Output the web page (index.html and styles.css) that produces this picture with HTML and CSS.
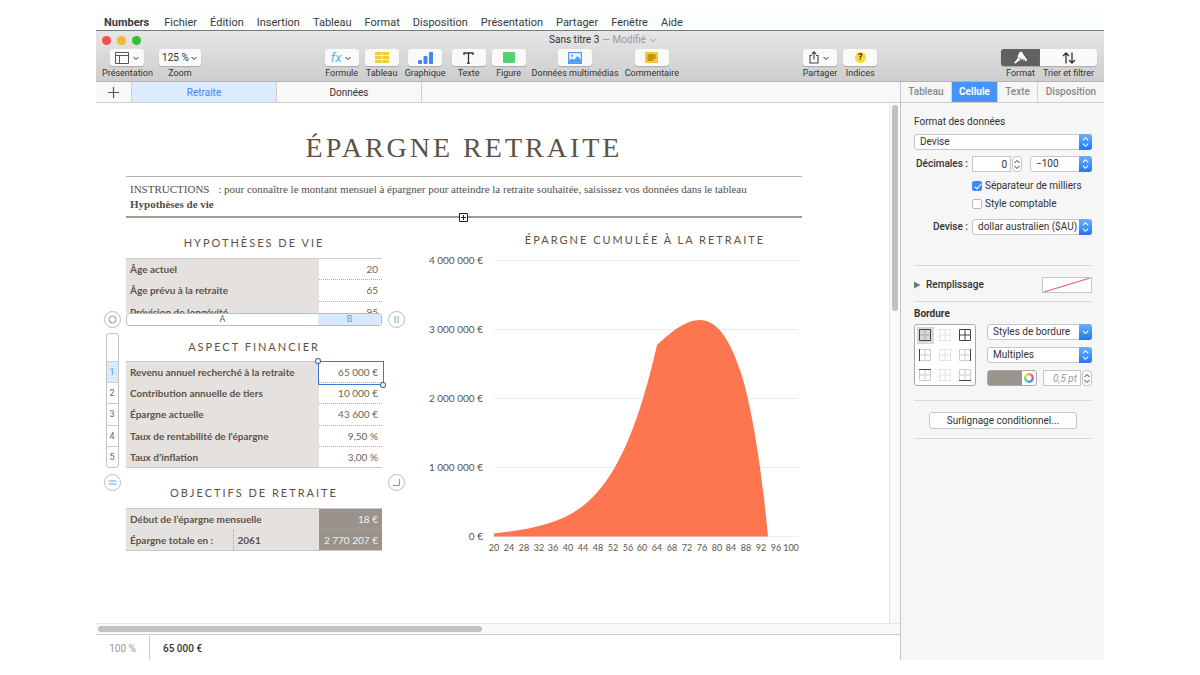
FILE: index.html
```html
<!DOCTYPE html>
<html lang="fr">
<head>
<meta charset="utf-8">
<meta name="viewport" content="width=device-width, initial-scale=1">
<title>Sans titre 3</title>
<link rel="stylesheet" href="styles.css">
</head>
<body>
<svg class="defs" aria-hidden="true">
  <symbol id="updown" viewBox="0 0 12 15"><path d="M3.5 6 6 3.5 8.5 6M3.5 9 6 11.5 8.5 9"/></symbol>
  <symbol id="down" viewBox="0 0 8 8"><path d="M1.5 3 4 5.500 6.500 3"/></symbol>
  <symbol id="grid" viewBox="0 0 14 14"><path d="M1.500 1.500h11v11h-11zM7 1.500v11M1.500 7h11"/></symbol>
</svg>

<nav class="menubar">
  <a class="app-name" href="#">Numbers</a>
  <a href="#">Fichier</a>
  <a href="#">Édition</a>
  <a href="#">Insertion</a>
  <a href="#">Tableau</a>
  <a href="#">Format</a>
  <a href="#">Disposition</a>
  <a href="#">Présentation</a>
  <a href="#">Partager</a>
  <a href="#">Fenêtre</a>
  <a href="#">Aide</a>
</nav>

<div class="window">
  <header class="chrome">
    <div class="titlebar">
      <div class="lights">
        <button class="light close" aria-label="Fermer"></button>
        <button class="light minimize" aria-label="Réduire"></button>
        <button class="light zoom" aria-label="Agrandir"></button>
      </div>
      <div class="title">Sans titre 3 <span class="modified">— Modifié</span><svg class="chevron" viewBox="0 0 8 8"><use href="#down"/></svg></div>
    </div>

    <div class="toolbar">
      <div class="tools">
        <button class="tool">
          <span class="face"><svg width="14" height="12" viewBox="0 0 14 12" fill="none" stroke="#555"><path d="M.5 .5h13v11H.5zM.5 3.500h13M4.500 3.500v8"/></svg><svg class="chevron" viewBox="0 0 8 8"><use href="#down"/></svg></span>
          <span>Présentation</span>
        </button>
        <button class="tool">
          <span class="face wide">125 %<svg class="chevron" viewBox="0 0 8 8"><use href="#down"/></svg></span>
          <span>Zoom</span>
        </button>
      </div>

      <div class="tools">
        <button class="tool">
          <span class="face"><i class="fx">fx</i><svg class="chevron" viewBox="0 0 8 8"><use href="#down"/></svg></span>
          <span>Formule</span>
        </button>
        <button class="tool">
          <span class="face"><svg width="14" height="11" viewBox="0 0 14 11" fill="#f7ca39"><path d="M0 0h6.600v3.200H0zM7.400 0H14v3.200H7.400zM0 4h6.600v3H0zM7.400 4H14v3H7.400zM0 7.800h6.600V11H0zM7.400 7.800H14V11H7.400z"/></svg></span>
          <span>Tableau</span>
        </button>
        <button class="tool">
          <span class="face"><svg width="15" height="12" viewBox="0 0 15 12" fill="#4087f5"><rect y="8" width="4" height="4" rx="1"/><rect x="5.500" y="4" width="4" height="8" rx="1"/><rect x="11" width="4" height="12" rx="1"/></svg></span>
          <span>Graphique</span>
        </button>
        <button class="tool">
          <span class="face"><svg width="11" height="12" viewBox="0 0 11 12" fill="none" stroke="#333" stroke-width="1.300"><path d="M1 3V1h9v2M5.500 1v10M4 11.200h3"/></svg></span>
          <span>Texte</span>
        </button>
        <button class="tool">
          <span class="face"><svg width="12" height="11" viewBox="0 0 12 11"><rect width="12" height="11" rx="1" fill="#4fd471"/></svg></span>
          <span>Figure</span>
        </button>
        <button class="tool">
          <span class="face"><svg width="14" height="12" viewBox="0 0 14 12"><rect x=".6" y=".6" width="12.800" height="10.800" fill="#eef6ff" stroke="#4e9bf3" stroke-width="1.200"/><circle cx="4" cy="3.800" r="1.100" fill="#4e9bf3"/><path d="M1 10.800V8.500L4 6.500l2 1.500 3.500-4L13 8v2.800z" fill="#4e9bf3"/></svg></span>
          <span>Données multimédias</span>
        </button>
        <button class="tool">
          <span class="face"><svg width="13" height="11" viewBox="0 0 13 11"><rect width="13" height="11" fill="#f8c73a"/><path d="M2.500 2h8v5L8.500 9h-6z" fill="#c8920d"/><path d="M8.500 9V7h2z" fill="#fbe08c"/></svg></span>
          <span>Commentaire</span>
        </button>
      </div>

      <div class="tools">
        <button class="tool">
          <span class="face"><svg width="10" height="13" viewBox="0 0 10 13" fill="none" stroke="#444" stroke-width="1.100"><path d="M3 4.500H1v7.500h8V4.500H7M5 8.500V1M2.900 3 5 .9 7.100 3"/></svg><svg class="chevron" viewBox="0 0 8 8"><use href="#down"/></svg></span>
          <span>Partager</span>
        </button>
        <button class="tool">
          <span class="face"><b class="hint">?</b></span>
          <span>Indices</span>
        </button>
      </div>

      <div class="segmented">
        <button class="tool">
          <span class="face on"><svg width="14" height="13" viewBox="0 0 14 13" fill="#fff"><path d="M5.500 1.200 7.500.5l5.800 8.700-2 1.200-1-2.600-.3 2.400-1.200-2.600-1 1.200L3.500 5.500z"/><path d="M4 6l2.600 3.300-2.100.6-2.600 2.300c-1 .7-1.900-.4-1.300-1.300L2.900 8.500z"/></svg></span>
          <span>Format</span>
        </button>
        <button class="tool">
          <span class="face"><svg width="14" height="12" viewBox="0 0 14 12" fill="none" stroke="#333" stroke-width="1.300"><path d="M4 11.500V1M1 4l3-3 3 3M10 .5V11M7 8l3 3 3-3"/></svg></span>
          <span>Trier et filtrer</span>
        </button>
      </div>
    </div>
  </header>

  <div class="body">
    <main class="main">
      <nav class="sheets">
        <button class="add" aria-label="Ajouter une feuille"><svg width="11" height="11" viewBox="0 0 11 11"><path d="M5.500 0v11M0 5.500h11" stroke="#555" stroke-width="1.200"/></svg></button>
        <button class="sheet-tab current">Retraite</button>
        <button class="sheet-tab">Données</button>
      </nav>

      <div class="viewport">
        <div class="sheet">
          <h1>ÉPARGNE RETRAITE</h1>
          <div class="instructions">
            <p><span class="lead">INSTRUCTIONS</span> : pour connaître le montant mensuel à épargner pour atteindre la retraite souhaitée, saisissez vos données dans le tableau <b>Hypothèses de vie</b></p>
            <svg class="anchor" viewBox="0 0 9 9"><path d="M.5.5h8v8h-8z" fill="#fff"/><path d="M.5.5h8v8h-8zM4.500 2v5M2 4.500h5" fill="none" stroke="#222"/></svg>
          </div>

          <div class="content">
            <div class="tables">
              <section class="block">
                <h2>HYPOTHÈSES DE VIE</h2>
                <div class="covered">
                  <table class="data life">
                    <tr><th scope="row">Âge actuel</th><td>20</td></tr>
                    <tr><th scope="row">Âge prévu à la retraite</th><td>65</td></tr>
                    <tr><th scope="row">Prévision de longévité</th><td>95</td></tr>
                  </table>
                </div>
              </section>

              <button class="handle select-all" aria-label="Tableau"><svg viewBox="0 0 15 15"><circle cx="7.500" cy="7.500" r="3.500"/></svg></button>
              <div class="columns"><span>A</span><span class="picked">B</span></div>
              <button class="handle" aria-label="Ajouter une colonne"><svg viewBox="0 0 15 15"><path d="M6 4v7M9 4v7"/></svg></button>

              <div class="rows"><span></span><span class="picked">1</span><span>2</span><span>3</span><span>4</span><span>5</span></div>
              <section class="block finance">
                <h2>ASPECT FINANCIER</h2>
                <table class="data">
                  <tr><th scope="row">Revenu annuel recherché à la retraite</th><td class="selected">65 000 €</td></tr>
                  <tr><th scope="row">Contribution annuelle de tiers</th><td>10 000 €</td></tr>
                  <tr><th scope="row">Épargne actuelle</th><td>43 600 €</td></tr>
                  <tr><th scope="row">Taux de rentabilité de l’épargne</th><td>9,50 %</td></tr>
                  <tr><th scope="row">Taux d’inflation</th><td>3,00 %</td></tr>
                </table>
              </section>

              <button class="handle add-row" aria-label="Ajouter une ligne"><svg viewBox="0 0 15 15"><path d="M3.500 6h8M3.500 9h8"/></svg></button>
              <section class="block goals">
                <h2>OBJECTIFS DE RETRAITE</h2>
                <table class="data">
                  <tr><th scope="row" colspan="2">Début de l’épargne mensuelle</th><td>18 €</td></tr>
                  <tr><th scope="row" class="split">Épargne totale en :</th><th>2061</th><td>2 770 207 €</td></tr>
                </table>
              </section>
              <button class="handle add-both" aria-label="Ajouter lignes et colonnes"><svg viewBox="0 0 15 15"><path d="M10.500 4v6.500H4"/></svg></button>
            </div>

            <figure class="chart">
              <h2>ÉPARGNE CUMULÉE À LA RETRAITE</h2>
              <svg viewBox="0 0 376 305">
                <path class="lines" d="M68 8.500h304M68 77.500h304M68 146.500h304M68 215.500h304M68 284.500h304"/>
                <path class="area" d="M68 284.500V281.500C105 277 137 272 160.700 250.700 194 223 215 163 231 93 244 81 259 68 274 68 292 68 304 89 314 118 327 156 337 230 342 284.500z"/>
                <g class="y-axis">
                  <text x="57" y="12">4 000 000 €</text>
                  <text x="57" y="81">3 000 000 €</text>
                  <text x="57" y="150">2 000 000 €</text>
                  <text x="57" y="219">1 000 000 €</text>
                  <text x="57" y="288">0 €</text>
                </g>
                <g class="x-axis">
                  <text x="68" y="299">20</text>
                  <text x="83" y="299">24</text>
                  <text x="98" y="299">28</text>
                  <text x="113" y="299">32</text>
                  <text x="127" y="299">36</text>
                  <text x="142" y="299">40</text>
                  <text x="157" y="299">44</text>
                  <text x="172" y="299">48</text>
                  <text x="187" y="299">52</text>
                  <text x="202" y="299">56</text>
                  <text x="216" y="299">60</text>
                  <text x="231" y="299">64</text>
                  <text x="246" y="299">68</text>
                  <text x="261" y="299">72</text>
                  <text x="276" y="299">76</text>
                  <text x="291" y="299">80</text>
                  <text x="305" y="299">84</text>
                  <text x="320" y="299">88</text>
                  <text x="335" y="299">92</text>
                  <text x="350" y="299">96</text>
                  <text x="365" y="299">100</text>
                </g>
              </svg>
            </figure>
          </div>
        </div>
        <div class="scroll-y"><div class="thumb"></div></div>
        <div class="scroll-x"><div class="thumb"></div></div>
      </div>

      <footer class="status">
        <span class="percent">100 %</span>
        <span class="value">65 000 €</span>
      </footer>
    </main>

    <aside class="inspector">
      <nav class="inspector-tabs">
        <button>Tableau</button>
        <button class="current">Cellule</button>
        <button>Texte</button>
        <button>Disposition</button>
      </nav>

      <section class="group format">
        <label for="format">Format des données</label>
        <span class="select">
          <select id="format"><option>Devise</option></select>
          <svg class="cap" viewBox="0 0 12 15"><use href="#updown"/></svg>
        </span>
        <div class="field decimals">
          <label for="decimals">Décimales :</label>
          <span class="stepped">
            <input id="decimals" type="text" value="0">
            <button class="stepper" aria-label="Décimales"><svg viewBox="2 1 8 13"><use href="#updown" width="12" height="15"/></svg></button>
          </span>
          <span class="select negative">
            <select aria-label="Nombres négatifs"><option>−100</option></select>
            <svg class="cap" viewBox="0 0 12 15"><use href="#updown"/></svg>
          </span>
        </div>
        <label class="check"><input type="checkbox" checked> Séparateur de milliers</label>
        <label class="check"><input type="checkbox"> Style comptable</label>
        <div class="field currency">
          <label for="currency">Devise :</label>
          <span class="select">
            <select id="currency"><option>dollar australien ($AU)</option></select>
            <svg class="cap" viewBox="0 0 12 15"><use href="#updown"/></svg>
          </span>
        </div>
      </section>

      <section class="group fill">
        <button class="disclosure"><svg width="7" height="8" viewBox="0 0 7 8"><path d="M0 0.500 6.500 4 0 7.500z" fill="#777"/></svg>Remplissage</button>
        <button class="no-fill" aria-label="Aucun remplissage"><svg viewBox="0 0 48 14" preserveAspectRatio="none"><path d="M1 14 47 0" stroke="#f0686c" stroke-width="1.200"/></svg></button>
      </section>

      <section class="group">
        <h3>Bordure</h3>
        <div class="border-tools">
          <div class="border-picker">
            <button class="on" aria-label="Toutes"><svg class="light-grid" viewBox="0 0 14 14"><use href="#grid"/><path class="edge" d="M1.500 1.500h11v11h-11z"/></svg></button>
            <button aria-label="Intérieures"><svg class="light-grid dim" viewBox="0 0 14 14"><use href="#grid"/></svg></button>
            <button aria-label="Quadrillage"><svg class="full" viewBox="0 0 14 14"><use href="#grid"/></svg></button>
            <button aria-label="Gauche"><svg class="light-grid" viewBox="0 0 14 14"><use href="#grid"/><path class="edge" d="M1.500 1v12"/></svg></button>
            <button aria-label="Verticale"><svg class="light-grid dim" viewBox="0 0 14 14"><use href="#grid"/></svg></button>
            <button aria-label="Droite"><svg class="light-grid" viewBox="0 0 14 14"><use href="#grid"/><path class="edge" d="M12.500 1v12"/></svg></button>
            <button aria-label="Haut"><svg class="light-grid" viewBox="0 0 14 14"><use href="#grid"/><path class="edge" d="M1 1.500h12"/></svg></button>
            <button aria-label="Horizontale"><svg class="light-grid dim" viewBox="0 0 14 14"><use href="#grid"/></svg></button>
            <button aria-label="Bas"><svg class="light-grid" viewBox="0 0 14 14"><use href="#grid"/><path class="edge" d="M1 12.500h12"/></svg></button>
          </div>
          <div class="border-style">
            <span class="select">
              <select aria-label="Styles de bordure"><option>Styles de bordure</option></select>
              <svg class="cap" viewBox="0 0 12 15"><path d="M3.500 6.500 6 9l2.500-2.500"/></svg>
            </span>
            <span class="select">
              <select aria-label="Trait"><option>Multiples</option></select>
              <svg class="cap" viewBox="0 0 12 15"><use href="#updown"/></svg>
            </span>
            <div class="stroke">
              <button class="color" aria-label="Couleur"><span class="wheel"></span></button>
              <span class="stepped">
                <input class="width" type="text" value="0,5 pt" aria-label="Épaisseur">
                <button class="stepper" aria-label="Épaisseur"><svg viewBox="2 1 8 13"><use href="#updown" width="12" height="15"/></svg></button>
              </span>
            </div>
          </div>
        </div>
      </section>

      <section class="group highlight">
        <button class="push">Surlignage conditionnel...</button>
      </section>
    </aside>
  </div>
</div>
</body>
</html>
```
FILE: styles.css
```css
* {
  box-sizing: border-box;
}

body {
  margin: 0;
  padding: 14px 8% 15px;
  min-height: 100vh;
  display: flex;
  flex-direction: column;
  background: #fff;
  color: #333;
  font: 10px/12px Roboto, "Liberation Sans", sans-serif;
}

button, input, select {
  margin: 0;
  padding: 0;
  border: 0;
  border-radius: 0;
  background: none;
  color: inherit;
  font: inherit;
}

h1, h2, h3, p, figure {
  margin: 0;
}

.defs {
  position: absolute;
  width: 0;
  height: 0;
}

.chevron {
  width: 8px;
  height: 8px;
  fill: none;
  stroke: currentColor;
}

/* menu bar */

.menubar {
  display: flex;
  gap: 13px;
  height: 16px;
  padding-left: 8px;
  background: #fcfdfd;
  font-size: 11px;
  line-height: 17px;
}

.menubar a {
  color: #3a3a3a;
  text-decoration: none;
}

.menubar .app-name {
  margin-right: 2px;
  font-weight: 700;
}

/* window */

.window {
  flex: 1;
  display: flex;
  flex-direction: column;
  border-top: 1px solid #6f7c80;
}

.chrome {
  height: 51px;
  background: linear-gradient(#e6e6e6, #cdcdcd);
  border-bottom: 1px solid #b4b4b4;
}

.titlebar {
  display: grid;
  grid-template-columns: 1fr auto 1fr;
  align-items: center;
  height: 18px;
  padding-left: 6px;
}

.lights {
  display: flex;
  gap: 6px;
}

.light {
  width: 9px;
  height: 9px;
  border-radius: 50%;
}

.close { background: #f9504f; }
.minimize { background: #f9b52c; }
.zoom { background: #2fc238; }

.title {
  display: flex;
  align-items: center;
  gap: 3px;
}

.modified, .title .chevron {
  color: #999;
}

.toolbar {
  display: flex;
  justify-content: space-between;
  padding: 0 7px 0 6px;
  font-size: 9px;
}

.tools {
  display: flex;
  gap: 6px;
}

.tool {
  display: flex;
  flex-direction: column;
  align-items: center;
  gap: 1px;
  white-space: nowrap;
}

.face {
  display: flex;
  align-items: center;
  justify-content: center;
  gap: 3px;
  width: 34px;
  height: 17px;
  background: #fafafa;
  border-radius: 3px;
  box-shadow: 0 1px 1px #aaa;
}

.face.wide {
  width: 42px;
  gap: 1px;
  font-size: 10px;
}

.fx {
  color: #4fb9ee;
  font-size: 13px;
  line-height: 14px;
}

.hint {
  width: 11px;
  height: 11px;
  border-radius: 50%;
  background: #fddb32;
  line-height: 11px;
  text-align: center;
}

.segmented {
  display: grid;
  grid-template-columns: 39px 57px;
}

.segmented .face {
  width: 100%;
  border-radius: 0 3px 3px 0;
}

.segmented .face.on {
  background: #616161;
  border-radius: 3px 0 0 3px;
}

.body {
  flex: 1;
  display: flex;
}

.main {
  flex: 1;
  display: flex;
  flex-direction: column;
}

.sheets {
  display: flex;
  height: 21px;
  background: #f8f8f8;
  border-bottom: 1px solid #cfcfcf;
}

.add {
  display: flex;
  align-items: center;
  justify-content: center;
  width: 36px;
  border-right: 1px solid #cfcfcf;
}

.sheet-tab {
  width: 145px;
  padding-top: 2px;
  border-right: 1px solid #cfcfcf;
}

.sheet-tab.current {
  background: #dcebfd;
  color: #4088f0;
}

.viewport {
  flex: 1;
  display: grid;
  grid-template: 1fr 11px / 1fr 11px;
}

.scroll-y {
  padding: 2px;
  background: #fafafa;
  border-left: 1px solid #e4e4e4;
}

.scroll-x {
  grid-column: span 2;
  padding: 2px;
  background: #fafafa;
  border-top: 1px solid #e4e4e4;
}

.thumb {
  background: #c1c1c1;
  border-radius: 3px;
}

.scroll-y .thumb {
  width: 6px;
  height: 40%;
}

.scroll-x .thumb {
  width: 48%;
  height: 6px;
}

.status {
  display: flex;
  height: 26px;
  border-top: 1px solid #cfcfcf;
  line-height: 28px;
}

.percent {
  width: 54px;
  border-right: 1px solid #cfcfcf;
  color: #999;
  text-align: center;
}

.value {
  padding-left: 13px;
  font-weight: 500;
}

/* spreadsheet */

.sheet {
  padding: 26px 87px 0 8px;
  color: #5b534a;
}

h1 {
  padding-left: 22px;
  font: 28px/38px "Liberation Serif", serif;
  letter-spacing: 3px;
  text-align: center;
}

.instructions {
  position: relative;
  margin: 9px 0 0 22px;
  padding: 5px 4px 4px;
  border-top: 1px solid #b3aea8;
  border-bottom: 2px solid #a39b93;
  color: #554d45;
  font: 11px/15px "Liberation Serif", serif;
}

.lead {
  margin-right: 6px;
}

.anchor {
  position: absolute;
  left: calc(50% - 5px);
  bottom: -6px;
  width: 9px;
  height: 9px;
}

.content {
  display: grid;
  grid-template-columns: 300px 1fr;
  column-gap: 22px;
  align-items: start;
}

h2 {
  font: 11px/16px Lato, sans-serif;
  letter-spacing: 2px;
  text-align: center;
}

.tables {
  display: grid;
  grid-template-columns: 16px 1fr 16px;
  column-gap: 6px;
  padding-top: 17px;
}

.block {
  grid-column: 2;
}

.block h2 {
  margin-bottom: 7px;
}

/* the last row slides under the column header of the selected table */
.covered {
  height: 55px;
  overflow: hidden;
}

.data {
  width: 100%;
  height: 107px;
  border-collapse: collapse;
  border-top: 1px solid #cdc9c5;
  border-bottom: 1px solid #cdc9c5;
  font: 10px/12px Lato, sans-serif;
}

.data th {
  padding: 0 4px;
  background: #e5e1de;
  font-weight: 700;
  text-align: left;
}

.data td {
  width: 63px;
  padding: 0 4px;
  border-bottom: 1px dotted #aaa;
  color: #6b645c;
  text-align: right;
}

.data tr:last-child td {
  border-bottom: 0;
}

.life {
  height: 65px;
}

.data .selected {
  position: relative;
}

.selected::after {
  content: "";
  position: absolute;
  inset: -1px -2px -3px -1px;
  border: 1px solid #3b78d8;
}

.selected::before {
  content: "";
  position: absolute;
  z-index: 1;
  left: -3px;
  top: -3px;
  width: 4px;
  height: 4px;
  border-radius: 50%;
  background: #fff;
  box-shadow: 0 0 0 1px #3a5f9f, 65px 24px #fff, 65px 24px 0 1px #3a5f9f;
}

.handle {
  align-self: center;
  width: 17px;
  height: 13px;
}

.handle svg {
  display: block;
  width: 17px;
  height: 17px;
  margin-top: -2px;
  border: 1px solid #bbb;
  border-radius: 50%;
  background: #fff;
  fill: none;
  stroke: #5fa4ea;
}

.select-all, .rows, .add-row {
  grid-column: 1;
}

.columns {
  display: grid;
  grid-template-columns: 1fr 63px;
  height: 13px;
  border: 1px solid #bbb;
  border-radius: 3px;
  background: #fff;
  color: #666;
  font-size: 9px;
  line-height: 11px;
  text-align: center;
}

.picked {
  background: #d9eafd;
  color: #5a97e8;
}

.rows {
  display: grid;
  grid-template-rows: 27px repeat(5, 1fr);
  justify-self: center;
  width: 13px;
  margin-top: 7px;
  border: 1px solid #c2c2c2;
  border-radius: 3px;
  color: #666;
  font-size: 9px;
  text-align: center;
}

.rows span {
  display: grid;
  place-items: center;
}

.rows span + span {
  border-top: 1px solid #ccc;
}

.finance {
  margin-top: 13px;
}

.finance h2 {
  margin-bottom: 6px;
}

.goals {
  padding-top: 17px;
}

.goals .data {
  height: 43px;
}

.goals td {
  background: #9a938c;
  color: #f0edea;
}

.data .split {
  width: 107px;
  border-right: 1px dotted #aaa;
}

.add-both, .add-row {
  align-self: start;
  margin-top: 8px;
}

.chart {
  padding-top: 14px;
}

.chart h2 {
  padding-left: 62px;
}

.chart svg {
  display: block;
  width: 100%;
  margin-top: 4px;
  fill: #5b534a;
  font: 10px Lato, sans-serif;
}

.chart .area {
  fill: rgba(254, 106, 64, 92%);
}

.lines {
  stroke: rgba(0, 0, 0, 8%);
}

.y-axis {
  text-anchor: end;
}

.x-axis {
  font-size: 9px;
  text-anchor: middle;
}

/* inspector */

.inspector {
  flex: none;
  width: 204px;
  background: #f6f6f6;
  border-left: 1px solid #c4c4c4;
}

.inspector-tabs {
  display: grid;
  grid-template-columns: 50px 46px 40px 1fr;
  height: 21px;
  border-bottom: 1px solid #cfcfcf;
  color: #888;
  font-weight: 500;
}

.inspector-tabs button + button {
  border-left: 1px solid #d4d4d4;
}

.inspector-tabs .current {
  background: #4694fb;
  color: #fff;
  font-weight: 700;
}

.group {
  margin: 0 12px 0 13px;
  padding: 6px 0 14px;
  border-bottom: 1px solid #dadada;
}

.format {
  display: flex;
  flex-direction: column;
  gap: 6px;
  padding: 13px 0 30px;
}

.select {
  display: grid;
  height: 16px;
}

.select select, .cap {
  grid-area: 1 / 1;
  min-width: 0;
}

.select select {
  appearance: none;
  padding: 0 14px 0 5px;
  border: 1px solid #c6c6c6;
  border-radius: 3px;
  background: #fff;
}

.cap {
  justify-self: end;
  width: 13px;
  height: 16px;
  border-radius: 0 3px 3px 0;
  background: linear-gradient(#6bb0fb, #1f77f6);
  fill: none;
  stroke: #fff;
  pointer-events: none;
}

.field {
  display: grid;
  grid-template-columns: 54px auto 1fr;
  align-items: center;
  column-gap: 4px;
}

.field label {
  text-align: right;
  font-weight: 500;
}

.decimals {
  margin-bottom: 2px;
}

.negative {
  margin-left: 4px;
}

.stepped {
  display: flex;
  gap: 1px;
}

.stepped input {
  width: 39px;
  height: 16px;
  padding: 0 3px;
  border: 1px solid #c6c6c6;
  background: #fff;
  text-align: right;
}

.stepper {
  width: 10px;
  height: 16px;
  border: 1px solid #c6c6c6;
  border-radius: 4px;
  background: #fff;
}

.stepper svg {
  display: block;
  width: 8px;
  height: 13px;
  fill: none;
  stroke: #333;
}

.check {
  display: flex;
  align-items: center;
  gap: 3px;
  margin-left: 58px;
}

.check input {
  appearance: none;
  width: 10px;
  height: 10px;
  border: 1px solid #bbb;
  border-radius: 2px;
  background: #fff;
}

.check input:checked {
  border-color: #3b8af7;
  background: #3b8af7;
}

.check input:checked::after {
  content: "";
  display: block;
  width: 3px;
  height: 6px;
  margin-left: 3px;
  border: solid #fff;
  border-width: 0 1px 1px 0;
  transform: rotate(40deg);
}

.currency {
  grid-template-columns: 54px 1fr;
  margin-top: 3px;
}

.fill {
  display: flex;
  justify-content: space-between;
  align-items: center;
  padding: 11px 0 8px;
}

.disclosure {
  display: flex;
  align-items: center;
  gap: 5px;
  font-weight: 500;
}

.no-fill {
  width: 50px;
  height: 16px;
  border: 1px solid #c6c6c6;
  background: #fff;
}

.no-fill svg {
  display: block;
  width: 48px;
  height: 14px;
}

h3 {
  font: inherit;
  font-weight: 700;
}

.border-tools {
  display: grid;
  grid-template-columns: 62px 1fr;
  column-gap: 11px;
  margin-top: 4px;
}

.border-picker {
  display: grid;
  grid-template-columns: repeat(3, 1fr);
  place-items: center;
  height: 62px;
  border: 1px solid #a8a8a8;
  border-radius: 3px;
  background: #fff;
}

.border-picker button {
  width: 17px;
  height: 17px;
}

.border-picker .on {
  background: #d8d8d8;
}

.border-picker svg {
  display: block;
  width: 14px;
  height: 14px;
  margin: auto;
  fill: none;
}

.light-grid {
  stroke: #ccc;
}

.on .light-grid {
  stroke: #aaa;
}

.light-grid.dim {
  stroke: #e2e2e2;
}

.full, .edge {
  stroke: #444;
}

.border-style {
  display: grid;
  align-content: space-between;
}

.stroke {
  display: flex;
  justify-content: space-between;
}

.color {
  display: flex;
  justify-content: flex-end;
  width: 50px;
  height: 16px;
  border: 1px solid #aaa;
  border-radius: 3px;
  background: linear-gradient(90deg, #9a958d 34px, #fff 34px);
}

.wheel {
  width: 10px;
  height: 10px;
  margin: 2px;
  border-radius: 50%;
  background: radial-gradient(#fff 25%, transparent 45%), conic-gradient(#f5b23c, #ee5a5a, #c65be0, #5a78f0, #46c8d8, #62d465, #f5e13c, #f5b23c);
}

.stepped .width {
  width: 38px;
  color: #999;
  font-style: italic;
}

.highlight {
  padding: 11px 15px 9px;
}

.push {
  width: 100%;
  height: 17px;
  border: 1px solid #c6c6c6;
  border-radius: 3px;
  background: #fff;
}
```
